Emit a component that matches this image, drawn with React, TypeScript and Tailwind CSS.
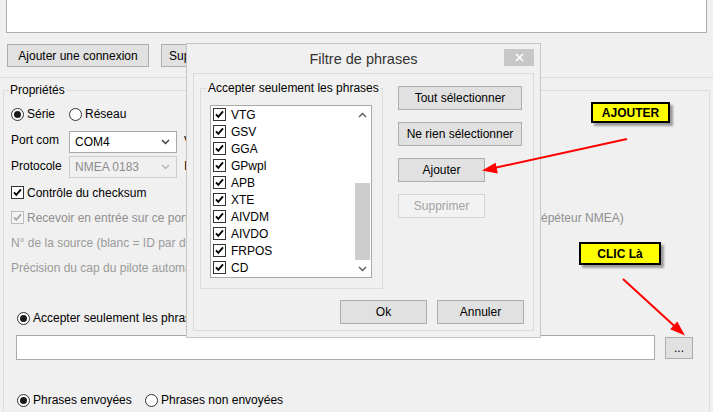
import React from "react";

function Radio({ checked = false }: { checked?: boolean }) {
  return (
    <span className="w-[13px] h-[13px] shrink-0 rounded-full border border-[#333333] bg-white flex items-center justify-center">
      {checked && <span className="w-[7px] h-[7px] rounded-full bg-[#1a1a1a]" />}
    </span>
  );
}

function Check({ disabled = false }: { disabled?: boolean }) {
  return (
    <span
      className={
        disabled
          ? "w-[13px] h-[13px] shrink-0 border border-[#bcbcbc] bg-[#f4f4f4] flex items-center justify-center"
          : "w-[13px] h-[13px] shrink-0 border border-[#333333] bg-white flex items-center justify-center"
      }
    >
      <svg width="11" height="11" viewBox="0 0 11 11">
        <path d="M2 5.3 L4.3 7.8 L9 2.4" fill="none" stroke={disabled ? "#a8a8a8" : "#000000"} strokeWidth="1.9" />
      </svg>
    </span>
  );
}

function ChevronDown({ color = "#404040" }: { color?: string }) {
  return (
    <svg width="9" height="6" viewBox="0 0 9 6">
      <path d="M1 1 L4.5 4.5 L8 1" fill="none" stroke={color} strokeWidth="1.5" />
    </svg>
  );
}

function ChevronUp({ color = "#606060" }: { color?: string }) {
  return (
    <svg width="9" height="6" viewBox="0 0 9 6">
      <path d="M1 5 L4.5 1.5 L8 5" fill="none" stroke={color} strokeWidth="1.5" />
    </svg>
  );
}

function Btn({
  className = "",
  disabled = false,
  children,
}: {
  className?: string;
  disabled?: boolean;
  children: React.ReactNode;
}) {
  return (
    <div
      className={
        (disabled
          ? "border border-[#d4d4d4] bg-[#f2f2f2] text-[#a3a3a3] "
          : "border border-[#adadad] bg-[#e1e1e1] text-black ") +
        "flex items-center justify-center whitespace-nowrap overflow-hidden shrink-0 " +
        className
      }
    >
      {children}
    </div>
  );
}

export default function App() {
  const items = ["VTG", "GSV", "GGA", "GPwpl", "APB", "XTE", "AIVDM", "AIVDO", "FRPOS", "CD"];
  return (
    <div className="relative w-[713px] h-[412px] overflow-hidden bg-[#f0f0f0] font-['Liberation_Sans',Arial,sans-serif] text-[12px] leading-[14px] text-black">
      {/* top text area */}
      <div className="mx-[6px] h-[33px] bg-white border-x border-b border-[#adadad]" />

      {/* connection buttons */}
      <div className="mt-[11px] pl-[7px] flex gap-[12px]">
        <Btn className="w-[142px] h-[23px]">Ajouter une connexion</Btn>
        <Btn className="w-[142px] h-[23px]">Supprimer la connexion</Btn>
      </div>

      {/* properties panel */}
      <div className="mt-[10px] border-t border-[#dcdcdc]">
        <fieldset className="mt-[5px] mx-[3px] border border-[#dcdcdc] pl-[7px] h-[400px]">
          <legend className="-ml-[2px] px-[1px] leading-[14px]">Propriétés</legend>

          <div className="mt-[8px] h-[18px] flex items-center">
            <div className="w-[58px] flex items-center gap-[3px]">
              <Radio checked />
              <span>Série</span>
            </div>
            <div className="flex items-center gap-[3px]">
              <Radio />
              <span>Réseau</span>
            </div>
          </div>

          <div className="mt-[8px] h-[22px] flex">
            <span className="w-[58px] pt-[2px]">Port com</span>
            <div className="w-[108px] h-[22px] bg-white border border-[#a9a9a9] flex items-center justify-between pl-[5px] pr-[6px]">
              <span>COM4</span>
              <ChevronDown />
            </div>
            <span className="ml-[7px] pt-[3px] whitespace-nowrap">Vitesse</span>
          </div>

          <div className="mt-[3px] h-[22px] flex">
            <span className="w-[58px] pt-[3px]">Protocole</span>
            <div className="w-[108px] h-[22px] bg-[#f0f0f0] border border-[#cccccc] flex items-center justify-between pl-[5px] pr-[6px] text-[#8d8d8d]">
              <span>NMEA 0183</span>
              <ChevronDown color="#b5b5b5" />
            </div>
            <span className="ml-[7px] pt-[3px] whitespace-nowrap">Instance</span>
          </div>

          <div className="mt-[2px] h-[25px] flex items-center gap-[3px]">
            <Check />
            <span>Contrôle du checksum</span>
          </div>
          <div className="h-[25px] flex items-center gap-[3px] text-[#8f8f8f] whitespace-nowrap">
            <Check disabled />
            <span className="w-[506px] shrink-0">Recevoir en entrée sur ce port</span>
            <span className="-ml-[3px]">(répéteur NMEA)</span>
          </div>
          <div className="h-[25px] flex items-center text-[#9a9a9a] whitespace-nowrap">
            N° de la source (blanc = ID par défaut)
          </div>
          <div className="h-[25px] flex items-center text-[#9a9a9a] whitespace-nowrap">
            Précision du cap du pilote automatique
          </div>

          <div className="mt-[29px] ml-[6px] h-[18px] flex items-center gap-[3px] whitespace-nowrap">
            <Radio checked />
            <span>Accepter seulement les phrases NMEA suivantes :</span>
          </div>

          <div className="mt-[8px] ml-[5px] flex items-start">
            <div className="w-[639px] h-[25px] bg-white border border-[#a9a9a9]" />
            <Btn className="ml-[10px] mt-[2px] w-[28px] h-[22px]">...</Btn>
          </div>

          <div className="mt-[31px] ml-[6px] h-[18px] flex items-center">
            <div className="w-[128px] flex items-center gap-[3px]">
              <Radio checked />
              <span>Phrases envoyées</span>
            </div>
            <div className="flex items-center gap-[3px]">
              <Radio />
              <span>Phrases non envoyées</span>
            </div>
          </div>
        </fieldset>
      </div>

      {/* dialog */}
      <div className="absolute left-[186px] top-[43px] w-[355px] h-[295px] bg-[#f0f0f0] border border-[#c6c6c6] flex flex-col px-[6px] pb-[6px]">
        <div className="relative h-[29px] flex items-center justify-center">
          <span className="text-[14.5px] leading-[18px] text-[#333333]">Filtre de phrases</span>
          <div className="absolute right-0 top-[5px] w-[30px] h-[17px] bg-[#c7c7c7] flex items-center justify-center">
            <svg width="9" height="9" viewBox="0 0 9 9">
              <path d="M1 1 L8 8 M8 1 L1 8" stroke="#ffffff" strokeWidth="1.6" />
            </svg>
          </div>
        </div>
        <div className="flex-1 border border-[#dadada] flex flex-col">
          <div className="flex">
            <fieldset className="ml-[6px] mt-[7px] w-[183px] border border-[#dcdcdc] pl-[9px] pb-[10px]">
              <legend className="-ml-[3px] px-[1px] leading-[14px] whitespace-nowrap">Accepter seulement les phrases</legend>
              <div className="mt-[10px] w-[162px] h-[173px] bg-white border border-[#a9a9a9] flex">
                <div className="flex-1 flex flex-col pl-[2px]">
                  {items.map((it) => (
                    <div key={it} className="h-[17px] flex items-center gap-[5px]">
                      <Check />
                      <span>{it}</span>
                    </div>
                  ))}
                </div>
                <div className="w-[17px] flex flex-col bg-white">
                  <div className="h-[17px] flex items-center justify-center">
                    <ChevronUp />
                  </div>
                  <div className="flex-1 flex flex-col justify-end">
                    <div className="h-[77px] mx-[1px] bg-[#cdcdcd]" />
                  </div>
                  <div className="h-[17px] flex items-center justify-center">
                    <ChevronDown color="#606060" />
                  </div>
                </div>
              </div>
            </fieldset>
            <div className="ml-[15px] mt-[12px] flex flex-col gap-[12px]">
              <Btn className="w-[124px] h-[24px]">Tout sélectionner</Btn>
              <Btn className="w-[124px] h-[24px]">Ne rien sélectionner</Btn>
              <Btn className="w-[87px] h-[24px]">Ajouter</Btn>
              <Btn disabled className="w-[87px] h-[24px]">Supprimer</Btn>
            </div>
          </div>
          <div className="mt-[11px] flex justify-end gap-[10px] pr-[9px]">
            <Btn className="w-[87px] h-[24px]">Ok</Btn>
            <Btn className="w-[87px] h-[24px]">Annuler</Btn>
          </div>
        </div>
      </div>

      {/* callouts */}
      <div className="absolute left-[591px] top-[102px] w-[79px] h-[21px] bg-[#ffff00] border-2 border-black shadow-[3px_3px_2px_rgba(0,0,0,0.35)] flex items-center justify-center font-bold">
        AJOUTER
      </div>
      <div className="absolute left-[579px] top-[242px] w-[82px] h-[23px] bg-[#ffff00] border-2 border-black shadow-[3px_3px_2px_rgba(0,0,0,0.35)] flex items-center justify-center font-bold">
        CLIC Là
      </div>

      {/* arrows */}
      <svg className="absolute left-0 top-0 pointer-events-none" width="713" height="412" viewBox="0 0 713 412">
        <line x1="627" y1="139" x2="494" y2="168" stroke="#ff0000" strokeWidth="2" />
        <polygon points="482,170.5 497.8,173.4 495.6,162.8" fill="#ff0000" />
        <line x1="623" y1="279" x2="676" y2="327.5" stroke="#ff0000" strokeWidth="2" />
        <polygon points="685,335.5 670.2,329.3 677.2,321.6" fill="#ff0000" />
      </svg>
    </div>
  );
}
